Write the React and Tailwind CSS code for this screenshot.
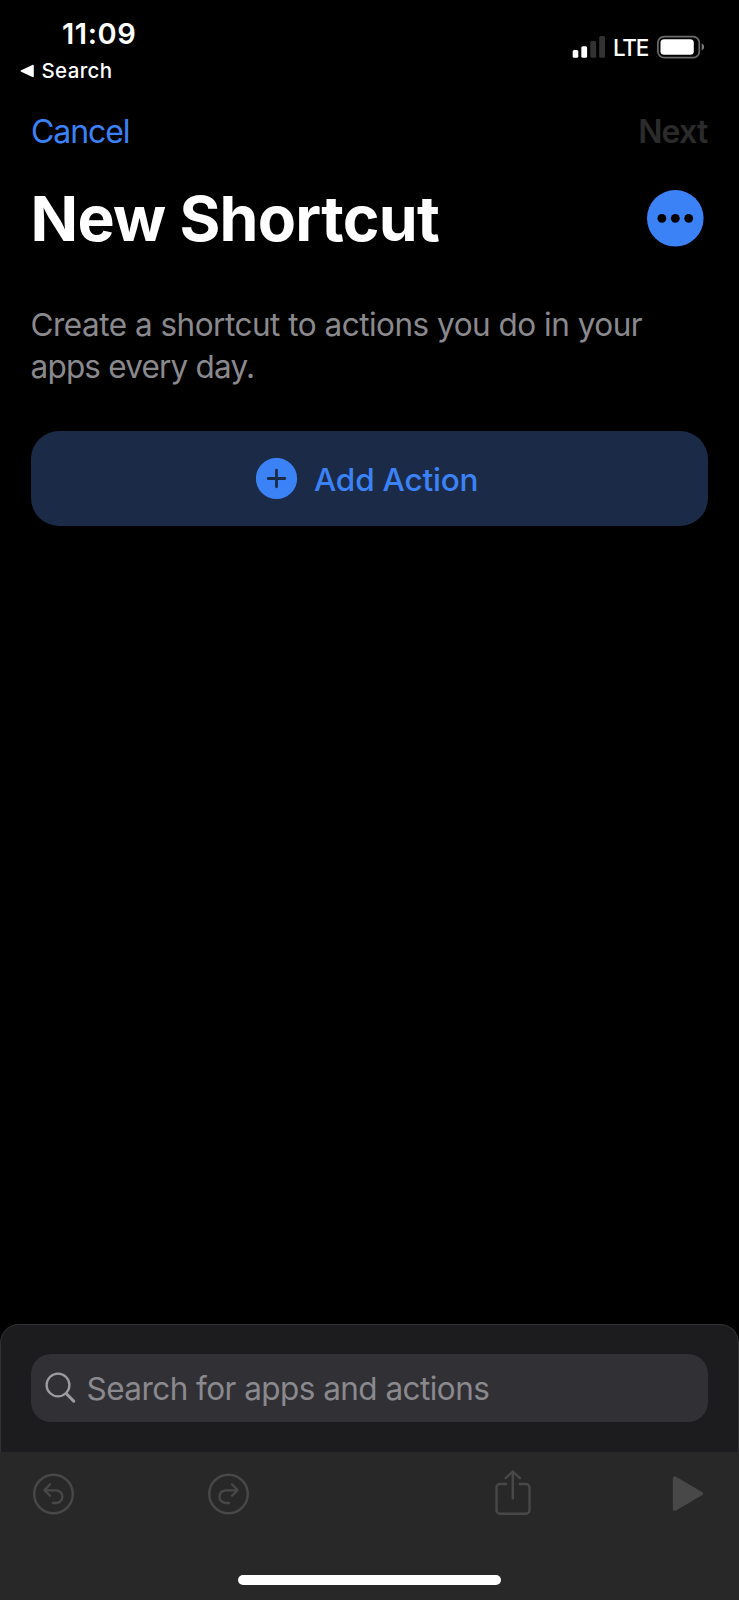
function SignalIcon() {
  return (
    <svg className="h-[24px] w-[34px] shrink-0" viewBox="0 0 34 24">
      <rect x="0.7" y="14.9" width="5.6" height="7.9" rx="1.5" fill="#fff" />
      <rect x="9.3" y="11.2" width="5.8" height="11.6" rx="1.5" fill="#fff" />
      <rect x="18.3" y="6" width="5.8" height="16.8" rx="1.5" fill="#333" />
      <rect x="27.2" y="1" width="5.8" height="21.8" rx="1.5" fill="#333" />
    </svg>
  );
}

function BatteryIcon() {
  return (
    <svg className="h-[24px] w-[48px] shrink-0" viewBox="0 0 48 24">
      <rect x="0.9" y="1.6" width="41.4" height="21" rx="6.2" fill="none" stroke="#6b6b6b" strokeWidth="1.7" />
      <rect x="3.5" y="4.2" width="33.3" height="15.6" rx="3.6" fill="#fff" />
      <path d="M44.7 8.6c1.6.6 2.4 2 2.4 3.4s-.8 2.8-2.4 3.4z" fill="#7a7a7a" />
    </svg>
  );
}

function StatusBar() {
  return (
    <div className="flex h-[96px] justify-between text-white">
      <div className="pt-[16px]">
        <div className="ml-[62px] h-[36px] text-[29px] leading-[36px] font-semibold tracking-[0.6px] whitespace-nowrap">11:09</div>
        <div className="ml-[20px] flex h-[37px] items-center">
          <svg className="h-[14px] w-[15px]" viewBox="0 0 15 14">
            <path d="M1.2 6.2 12.4.9c.8-.4 1.4 0 1.4.8v10.6c0 .8-.6 1.2-1.4.8L1.2 7.8c-.8-.4-.8-1.2 0-1.6z" fill="#fff" />
          </svg>
          <span className="ml-[6.5px] text-[20.5px] leading-[36px] font-medium tracking-[0.35px]">Search</span>
        </div>
      </div>
      <div className="mt-[35px] mr-[34px] flex h-[24px] items-center">
        <SignalIcon />
        <span className="ml-[7px] w-[44px] pt-[2px] text-[22.5px] leading-[24px] font-medium tracking-[-1.3px]">LTE</span>
        <BatteryIcon />
      </div>
    </div>
  );
}

function UndoIcon() {
  return (
    <svg className="size-[42px]" viewBox="0 0 42 42" fill="none" stroke="#484848" strokeWidth="2.3" strokeLinecap="round" strokeLinejoin="round">
      <circle cx="21.5" cy="21" r="19.3" strokeWidth="2.4" />
      <path d="M18 11.3 12.4 17.3 18 22.8M12.7 17.3H24a6.35 6.35 0 0 1 0 12.7H20.8" />
    </svg>
  );
}

function RedoIcon() {
  return (
    <svg className="size-[42px]" viewBox="0 0 42 42" fill="none" stroke="#484848" strokeWidth="2.3" strokeLinecap="round" strokeLinejoin="round">
      <circle cx="21.5" cy="21" r="19.3" strokeWidth="2.4" />
      <path d="M25 11.3 30.6 17.3 25 22.8M30.3 17.3H18.8a6.35 6.35 0 0 0 0 12.7H22" />
    </svg>
  );
}

function ShareIcon() {
  return (
    <svg className="h-[46px] w-[36px]" viewBox="0 0 36 46" fill="none" stroke="#484848" strokeWidth="2.4" strokeLinecap="round" strokeLinejoin="round">
      <path d="M11.1 14H5.1a3.6 3.6 0 0 0-3.6 3.6v22.600A3.6 3.6 0 0 0 5.1 43.800H30.9a3.6 3.6 0 0 0 3.6-3.6V17.6A3.6 3.6 0 0 0 30.9 14H24.7M17.8 28.4V1.5M10.7 8.2 17.8 1.5 24.9 8.2" />
    </svg>
  );
}

function PlayIcon() {
  return (
    <svg className="h-[36px] w-[32px]" viewBox="0 0 32 36">
      <path d="M.8 2.4C.8.6 2.5-.1 4 .8L30 15.9c1.5.9 1.5 2.5 0 3.4L4 34.4c-1.5.9-3.2.2-3.2-1.6z" fill="#484848" />
    </svg>
  );
}

export default function App() {
  return (
    <div className="flex h-[1600px] w-[739px] flex-col overflow-hidden bg-black font-['Inter',sans-serif]">
      <StatusBar />
      <nav className="flex h-[70px] items-center justify-between pt-[2px] pr-[31.5px] pl-[31px] text-[32px] leading-[40px]">
        <button className="tracking-[-1.1px] text-[#3c82f7]">Cancel</button>
        <button className="font-semibold tracking-[-0.8px] text-[#2b2b2b]">Next</button>
      </nav>
      <div className="flex h-[104px] items-center justify-between pr-[35px] pl-[30.5px]">
        <h1 className="text-[62.5px] leading-[80px] font-bold tracking-[-0.75px] whitespace-nowrap text-white">New Shortcut</h1>
        <svg className="size-[57px]" viewBox="0 0 57 57" role="button">
          <circle cx="28.3" cy="28.3" r="28.3" fill="#3c82f7" />
          <circle cx="14.9" cy="28.3" r="4.4" />
          <circle cx="28.3" cy="28.3" r="4.4" />
          <circle cx="41.7" cy="28.3" r="4.4" />
        </svg>
      </div>
      <p className="mt-[34px] ml-[30.5px] text-[31.5px] leading-[42px] tracking-[-0.5px] whitespace-nowrap text-[#8a898e]">
        Create a shortcut to actions you do in your
        <br />
        <span className="tracking-[-0.8px]">apps every day.</span>
      </p>
      <button className="mr-[31px] ml-[30.6px] mt-[43px] flex h-[95px] shrink-0 items-center rounded-[28px] bg-[#1b2b47] pl-[225.4px] text-[#3c82f7]">
        <svg className="size-[42px]" viewBox="0 0 42 42">
          <circle cx="20.5" cy="20.5" r="20.6" fill="#3c82f7" />
          <path d="M20.5 12.2V28.8M12.2 20.5H28.8" stroke="#1b2b47" strokeWidth="2.8" strokeLinecap="round" />
        </svg>
        <span className="ml-[16px] pt-[2px] text-[31.5px] leading-[40px] font-medium tracking-[-0.2px] whitespace-nowrap">Add Action</span>
      </button>
      <div className="mt-auto h-[128.5px] shrink-0 rounded-t-[19px] border border-b-0 border-[#323234] bg-[#1c1c1e] px-[29.6px] pt-[29.5px]">
        <div className="flex h-[68px] items-center rounded-[20px] bg-[#313035] pl-[13.4px]">
          <svg className="size-[34px]" viewBox="0 0 34 34" fill="none" stroke="#9d9ca3" strokeLinecap="round">
            <circle cx="14" cy="14" r="11.4" strokeWidth="2.3" />
            <path d="M22.4 22.8 29.7 30.1" strokeWidth="3" />
          </svg>
          <span className="ml-[8.5px] pt-[2px] text-[31.5px] leading-[40px] tracking-[-0.55px] whitespace-nowrap text-[#8a898e]">Search for apps and actions</span>
        </div>
      </div>
      <footer className="flex h-[148px] shrink-0 flex-col items-center bg-[#282828]">
        <div className="flex h-[84px] w-full items-center pl-[32px]">
          <UndoIcon />
          <div className="ml-[133px] h-[42px]">
            <RedoIcon />
          </div>
          <div className="ml-[246px] h-[48px]">
            <ShareIcon />
          </div>
          <div className="ml-[141px] h-[36px]">
            <PlayIcon />
          </div>
        </div>
        <div className="mt-[39px] h-[10px] w-[263px] rounded-full bg-white" />
      </footer>
    </div>
  );
}
